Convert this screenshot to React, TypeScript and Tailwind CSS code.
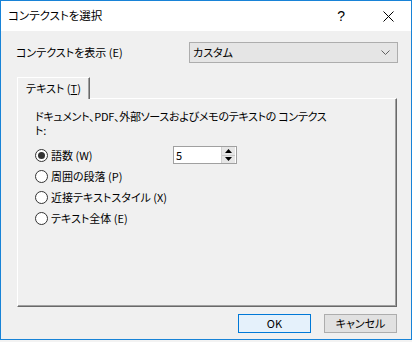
import React from "react";

const font = "font-['Noto_Sans_CJK_JP','Noto_Sans',sans-serif] [font-feature-settings:'palt']";

function Radio({ checked, label }: { checked?: boolean; label: React.ReactNode }) {
  return (
    <div className="flex items-center h-[20px]">
      <span className="w-[13px] h-[13px] rounded-full border border-[#333333] bg-white flex items-center justify-center">
        {checked && <span className="w-[7px] h-[7px] rounded-full bg-[#333333]" />}
      </span>
      <span className="ml-[3px] leading-none whitespace-nowrap">{label}</span>
    </div>
  );
}

function SpinBox() {
  return (
    <div className="w-[64px] h-[18px] border border-[#a0a0a0] bg-white flex items-center">
      <span className="pl-[2px] flex-1 leading-none">5</span>
      <div className="w-[14px] h-[16px] mr-[1px] flex flex-col bg-[#e6e6e6] border-l border-[#d0d0d0]">
        <div className="flex-1 flex items-center justify-center border-b border-[#c8c8c8]">
          <svg width="7" height="4" viewBox="0 0 7 4"><path d="M0 4 L3.5 0 L7 4 Z" fill="#000" /></svg>
        </div>
        <div className="flex-1 flex items-center justify-center">
          <svg width="7" height="4" viewBox="0 0 7 4"><path d="M0 0 L3.5 4 L7 0 Z" fill="#000" /></svg>
        </div>
      </div>
    </div>
  );
}

export default function App() {
  return (
    <div className={`w-[412px] h-[342px] bg-[#f3f3f3] text-[11px] text-black ${font}`}>
      <div className="w-[412px] h-[340px] border border-[#1883d7] flex flex-col">
        <div className="h-[30px] bg-white flex items-center pl-[7px] shrink-0">
          <span className="leading-none text-[11.5px]">コンテクストを選択</span>
          <span className="ml-auto mr-[38px] text-[14px] leading-none font-['Liberation_Sans',sans-serif]">?</span>
          <svg width="11" height="11" viewBox="0 0 11 11" className="mr-[17px]">
            <path d="M0.5 0.5 L10.5 10.5 M10.5 0.5 L0.5 10.5" stroke="#000" strokeWidth="1" />
          </svg>
        </div>

        <div className="flex-1 bg-[#f0f0f0] flex flex-col">
          <div className="flex items-center mt-[11px] pl-[15px] pr-[13px]">
            <span className="leading-none">コンテクストを表示 (E)</span>
            <div className="ml-auto w-[209px] h-[21px] bg-[#e5e5e5] border border-[#adadad] flex items-center pl-[3px] pr-[7px]">
              <span className="leading-none">カスタム</span>
              <svg width="9" height="5" viewBox="0 0 9 5" className="ml-auto">
                <path d="M0.5 0.5 L4.5 4.5 L8.5 0.5" stroke="#606060" fill="none" />
              </svg>
            </div>
          </div>

          <div className="ml-[16px] mt-[14px] w-[380px] flex flex-col">
            <div className="relative z-10 w-[73px] h-[22px] -mb-[1px] bg-[#f0f0f0] border-l border-t border-white border-r border-r-[#696969] shadow-[inset_-1px_0_0_#a0a0a0] flex items-center justify-center">
              <span className="leading-none">
                テキスト (<span className="underline">T</span>)
              </span>
            </div>
            <div className="h-[209px] border-l border-t border-white border-r border-b border-r-[#696969] border-b-[#696969] shadow-[inset_-1px_-1px_0_#a0a0a0] pt-[10px] pl-[17px]">
              <div className="flex flex-col tracking-[-0.3px]">
                <span className="leading-[14px]">ドキュメント、PDF、外部ソースおよびメモのテキストの コンテクス</span>
                <span className="leading-[14px]">ト:</span>
              </div>
              <div className="mt-[8px] flex flex-col gap-[1px]">
                <div className="flex items-center">
                  <div className="w-[138px]">
                    <Radio checked label="語数 (W)" />
                  </div>
                  <SpinBox />
                </div>
                <Radio label="周囲の段落 (P)" />
                <Radio label="近接テキストスタイル (X)" />
                <Radio label="テキスト全体 (E)" />
              </div>
            </div>
          </div>

          <div className="flex justify-end gap-[13px] mt-[7px] pr-[14px]">
            <button className="w-[73px] h-[19px] border border-[#0078d7] bg-[#e5f1fb] leading-none">OK</button>
            <button className="w-[73px] h-[19px] border border-[#adadad] bg-[#e1e1e1] leading-none">キャンセル</button>
          </div>
        </div>
      </div>
    </div>
  );
}
